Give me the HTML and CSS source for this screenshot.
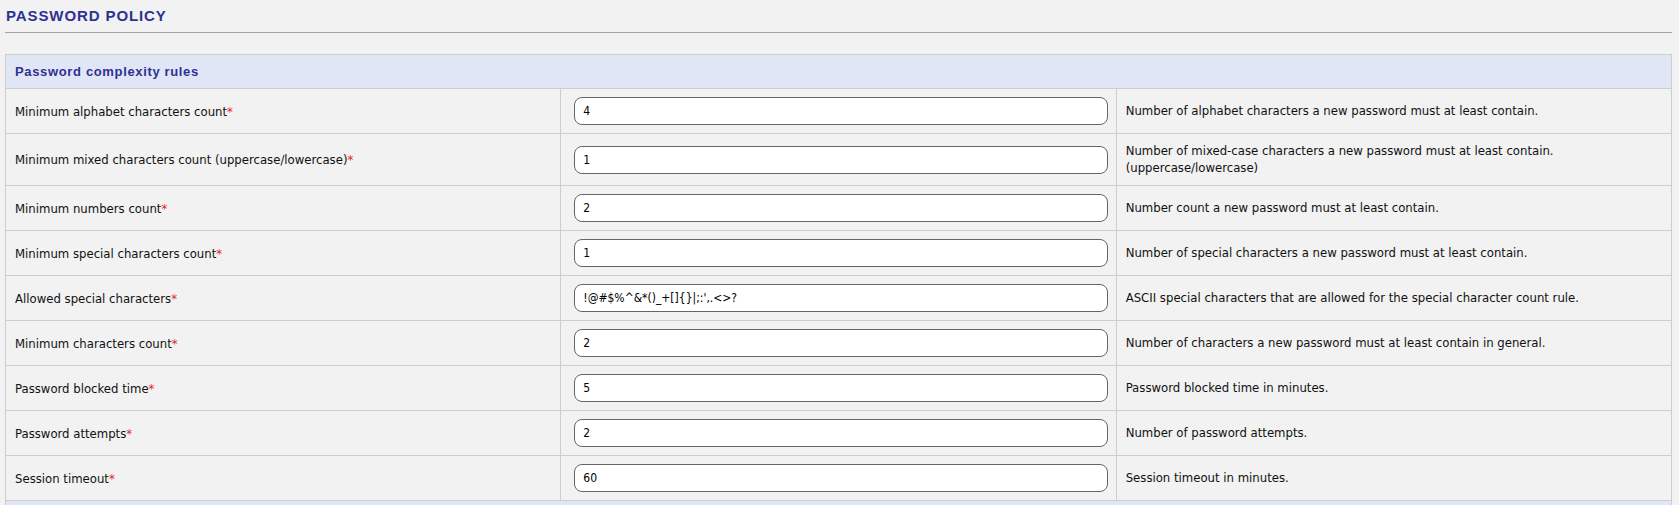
FILE: index.html
```html
<!DOCTYPE html>
<html lang="en">
<head>
<meta charset="utf-8">
<title>Password policy</title>
<link rel="stylesheet" href="styles.css">
</head>
<body>
<div class="page">
  <div class="page-title">PASSWORD POLICY</div>
  <table class="policy">
    <colgroup><col class="c1"><col class="c2"><col class="c3"></colgroup>
    <thead>
      <tr class="section"><th colspan="3">Password complexity rules</th></tr>
    </thead>
    <tbody>
      <tr><td class="lbl">Minimum alphabet characters count<span class="req">*</span></td><td class="val"><input class="field" type="text" value="4"></td><td class="desc">Number of alphabet characters a new password must at least contain.</td></tr>
      <tr><td class="lbl">Minimum mixed characters count (uppercase/lowercase)<span class="req">*</span></td><td class="val"><input class="field" type="text" value="1"></td><td class="desc">Number of mixed-case characters a new password must at least contain.<br>(uppercase/lowercase)</td></tr>
      <tr><td class="lbl">Minimum numbers count<span class="req">*</span></td><td class="val"><input class="field" type="text" value="2"></td><td class="desc">Number count a new password must at least contain.</td></tr>
      <tr><td class="lbl">Minimum special characters count<span class="req">*</span></td><td class="val"><input class="field" type="text" value="1"></td><td class="desc">Number of special characters a new password must at least contain.</td></tr>
      <tr><td class="lbl">Allowed special characters<span class="req">*</span></td><td class="val"><input class="field" type="text" value="!@#$%^&amp;*()_+[]{}|;:',.&lt;&gt;?"></td><td class="desc">ASCII special characters that are allowed for the special character count rule.</td></tr>
      <tr><td class="lbl">Minimum characters count<span class="req">*</span></td><td class="val"><input class="field" type="text" value="2"></td><td class="desc">Number of characters a new password must at least contain in general.</td></tr>
      <tr><td class="lbl">Password blocked time<span class="req">*</span></td><td class="val"><input class="field" type="text" value="5"></td><td class="desc">Password blocked time in minutes.</td></tr>
      <tr><td class="lbl">Password attempts<span class="req">*</span></td><td class="val"><input class="field" type="text" value="2"></td><td class="desc">Number of password attempts.</td></tr>
      <tr><td class="lbl">Session timeout<span class="req">*</span></td><td class="val"><input class="field" type="text" value="60"></td><td class="desc">Session timeout in minutes.</td></tr>
    </tbody>
    <tfoot>
      <tr class="section"><th colspan="3">&nbsp;</th></tr>
    </tfoot>
  </table>
</div>
</body>
</html>
```

FILE: styles.css
```css
html, body {
  margin: 0;
  padding: 0;
  background: #f2f2f2;
}

body {
  font-family: "DejaVu Sans Condensed", "Liberation Sans", Arial, sans-serif;
  font-size: 13px;
  color: #111;
}

.page {
  padding: 6px 7px 0 5px;
}

.page-title {
  font-family: "Liberation Sans", Arial, sans-serif;
  font-weight: bold;
  font-size: 15px;
  letter-spacing: 0.9px;
  line-height: 20px;
  color: #2e3192;
  padding: 0 0 6px 1px;
  border-bottom: 1px solid #a3a3a3;
}

.policy {
  margin-top: 21px;
  width: 100%;
  border-collapse: collapse;
  table-layout: fixed;
  border: 1px solid #cdcdcd;
}

.policy col.c1, .policy col.c2, .policy col.c3 {
  width: 33.333%;
}

.section th {
  background: #e1e6f7;
  color: #2e3192;
  text-align: left;
  font-family: "Liberation Sans", Arial, sans-serif;
  font-weight: bold;
  font-size: 13px;
  letter-spacing: 0.65px;
  line-height: 17px;
  padding: 8px 9px;
  border: 1px solid #cdcdcd;
}

.policy td {
  border: 1px solid #cdcdcd;
  vertical-align: middle;
  line-height: 17px;
}

.lbl {
  padding: 8px 9px;
}

.val {
  padding: 8px 8px 8px 13px;
}

.desc {
  padding: 8px 9px 9px;
}

.req {
  color: #ea1c24;
}

.field {
  display: block;
  box-sizing: border-box;
  width: 100%;
  height: 28px;
  margin: 0;
  padding: 0 8px;
  border: 1px solid #666;
  border-radius: 8px;
  background: #fff;
  font-family: "DejaVu Sans Condensed", "Liberation Sans", Arial, sans-serif;
  font-size: 12px;
  color: #000;
  outline: none;
}
```
